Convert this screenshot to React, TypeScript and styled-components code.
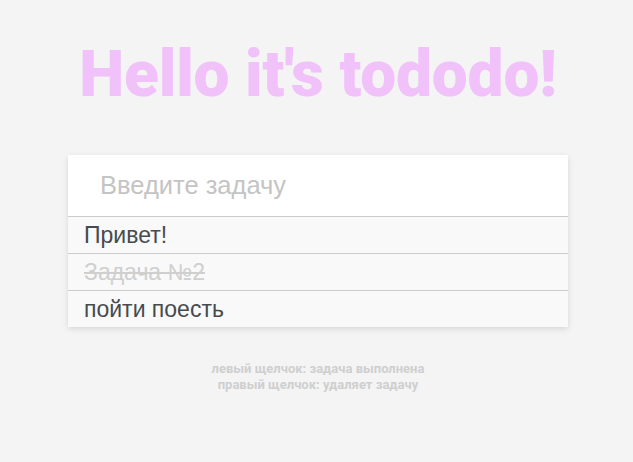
import React from "react";
import styled, { createGlobalStyle } from "styled-components";

const Global = createGlobalStyle`
  html, body { margin: 0; padding: 0; background: #f4f4f4; }
  body { font-family: Roboto, "Noto Sans", sans-serif; }
`;

const Page = styled.div`
  display: flex;
  flex-direction: column;
  align-items: center;
  padding-top: 30px;
  padding-left: 3px;
`;

const Title = styled.h1`
  margin: 0;
  font-family: Roboto, sans-serif;
  font-weight: 900;
  font-size: 64px;
  line-height: 90px;
  color: #f1c1fa;
  letter-spacing: -0.2px;
`;

const Card = styled.div`
  margin-top: 35px;
  width: 500px;
  background: #f9f9f9;
  box-shadow: 0 2px 6px rgba(0, 0, 0, 0.12);
`;

const Input = styled.input`
  display: block;
  box-sizing: border-box;
  width: 100%;
  height: 62px;
  border: none;
  border-bottom: 1px solid #cccccc;
  background: #fff;
  padding: 0 0 0 32px;
  font-family: "Liberation Sans", Arial, sans-serif;
  font-size: 25.5px;
  color: #444;
  outline: none;
  &::placeholder { color: #c4c4c4; }
`;

const Item = styled.div<{ $done?: boolean }>`
  box-sizing: border-box;
  height: 37px;
  padding: 0 16px;
  display: flex;
  align-items: center;
  font-family: "Liberation Sans", Arial, sans-serif;
  font-size: 23px;
  color: ${(p) => (p.$done ? "#cfcfcf" : "#474b4e")};
  text-decoration: ${(p) => (p.$done ? "line-through" : "none")};
  border-bottom: 1px solid #cccccc;
  &:last-child { border-bottom: none; height: 36px; }
`;

const Hint = styled.div`
  margin-top: 34px;
  text-align: center;
  font-family: Roboto, sans-serif;
  font-weight: 700;
  font-size: 13px;
  line-height: 16px;
  color: #cfcfcf;
`;

export default function App() {
  return (
    <>
      <Global />
      <Page>
        <Title>Hello it's tododo!</Title>
        <Card>
          <Input placeholder="Введите задачу" />
          <Item>Привет!</Item>
          <Item $done>Задача №2</Item>
          <Item>пойти поесть</Item>
        </Card>
        <Hint>
          левый щелчок: задача выполнена
          <br />
          правый щелчок: удаляет задачу
        </Hint>
      </Page>
    </>
  );
}
